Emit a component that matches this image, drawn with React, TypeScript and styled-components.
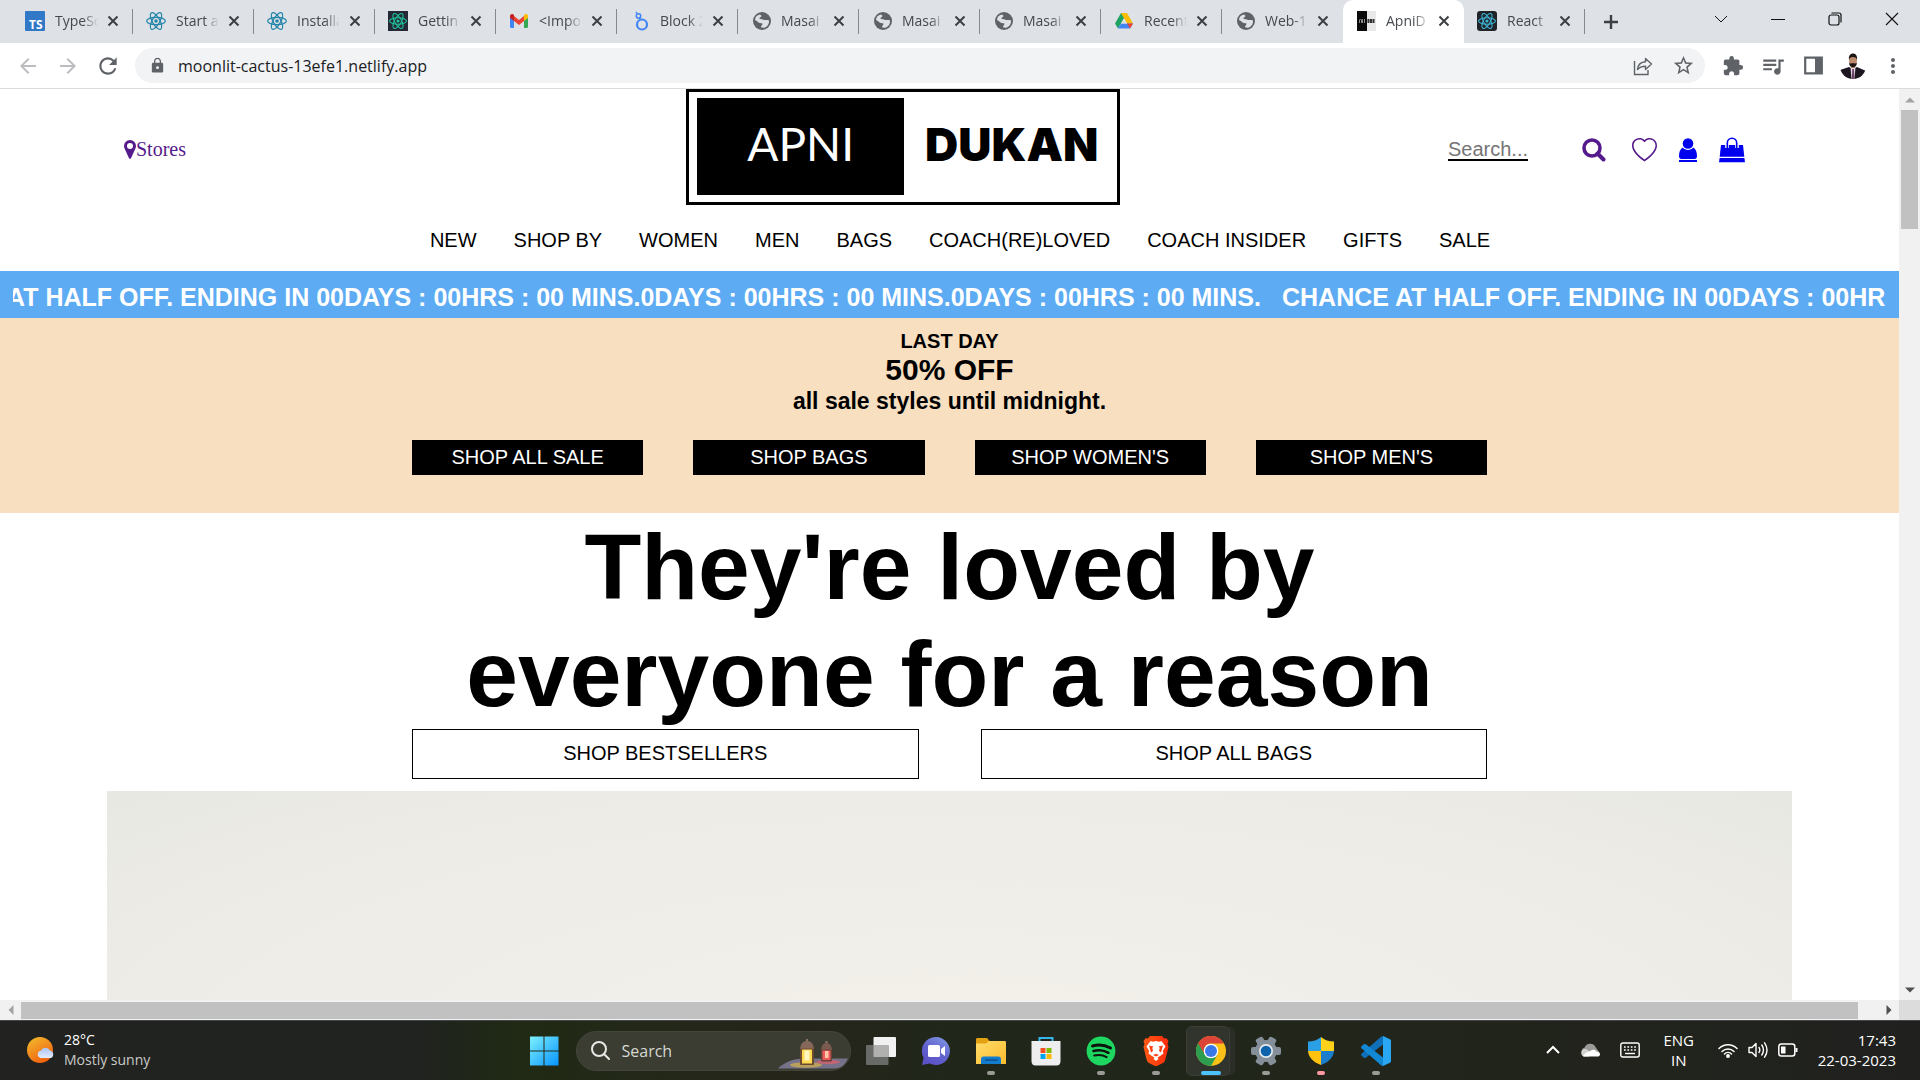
import React from "react";
import styled, { createGlobalStyle } from "styled-components";
import { BsHeart } from "react-icons/bs";
import { MdExtension, MdLock, MdQueueMusic, MdStarOutline, MdRefresh, MdArrowBack, MdArrowForward, MdMoreVert } from "react-icons/md";

const ui = `"Open Sans", "Noto Sans", sans-serif`;
const arial = `"Liberation Sans", Arial, sans-serif`;
const serif = `"Liberation Serif", "Times New Roman", serif`;

const GlobalStyle = createGlobalStyle`
  *, *::before, *::after { box-sizing: border-box; }
  body { margin: 0; overflow: hidden; background: #fff; }
  button { border: 0; padding: 0; background: none; font: inherit; color: inherit; cursor: pointer; }
  a { color: inherit; text-decoration: none; }
  svg { display: block; flex: none; }
  h1, h2, p { margin: 0; }
`;

const Screen = styled.div`
  display: flex;
  flex-direction: column;
  height: 100vh;
  font-family: ${ui};
`;

/* ---------- Browser window ---------- */

const TabStrip = styled.div`
  display: flex;
  align-items: stretch;
  height: 43px;
  flex: none;
  padding-left: 12px;
  background: #dee1e6;
  color: #45484d;
`;

const TabBox = styled.div<{ $active?: boolean; $plain?: boolean }>`
  position: relative;
  display: flex;
  align-items: center;
  width: 121px;
  flex: none;
  padding: 0 14px 1px 13px;
  border-radius: 10px 10px 0 0;
  background: ${(p) => (p.$active ? "#fff" : "transparent")};

  &::after {
    content: "";
    position: absolute;
    right: 0;
    top: 9px;
    width: 1px;
    height: 25px;
    background: ${(p) => (p.$active || p.$plain ? "transparent" : "#85888d")};
  }
`;

const TabTitle = styled.button`
  flex: 1;
  min-width: 0;
  margin-left: 10px;
  overflow: hidden;
  text-align: left;
  white-space: nowrap;
  font-size: 14px;
  line-height: 20px;
  mask-image: linear-gradient(90deg, #000 65%, transparent 100%);
`;

const TabClose = styled.button`
  width: 12px;
  height: 12px;
  margin-left: 9px;
`;

const NewTab = styled.button`
  width: 20px;
  margin: 0 17px 0 16px;
  display: grid;
  place-items: center;
`;

const WindowControls = styled.div`
  display: flex;
  margin-left: auto;
  height: 37px;
`;

const WindowButton = styled.button`
  display: grid;
  place-items: center;
  width: 57px;
  color: #111;
`;

const Toolbar = styled.div`
  display: flex;
  align-items: center;
  flex: none;
  height: 46px;
  padding: 0 7px 0 8px;
  border-bottom: 1px solid #dadce0;
  background: #fff;
  color: #5f6368;
`;

const ToolButton = styled.button<{ $dim?: boolean }>`
  display: grid;
  place-items: center;
  width: 40px;
  height: 35px;
  color: ${(p) => (p.$dim ? "#bbbdc0" : "#5f6368")};
`;

const AddressBar = styled.div`
  display: flex;
  align-items: center;
  flex: 1;
  height: 35px;
  margin: 0 8px 0 7px;
  padding: 0 2px 0 14px;
  border-radius: 18px;
  background: #f1f3f4;
`;

const AddressInput = styled.input`
  flex: 1;
  min-width: 0;
  margin-left: 12px;
  padding: 0;
  border: 0;
  outline: 0;
  background: none;
  color: #202124;
  font: 16px/24px ${ui};
`;

/* ---------- Viewport and scroll bars ---------- */

const Viewport = styled.div`
  display: grid;
  grid-template-columns: 1fr 21px;
  grid-template-rows: 1fr 20px;
  flex: 1;
  min-height: 0;
`;

const Track = styled.div<{ $across?: boolean }>`
  display: flex;
  flex-direction: ${(p) => (p.$across ? "row" : "column")};
  align-items: center;
  justify-content: space-between;
  background: #f1f1f1;
`;

const Arrow = styled.span`
  display: grid;
  place-items: center;
  width: 21px;
  height: 21px;
`;

const ThumbDown = styled.span`
  width: 17px;
  height: 119px;
  margin-bottom: auto;
  background: #c1c1c1;
`;

const ThumbAcross = styled.span`
  flex: 1;
  height: 17px;
  margin-right: 20px;
  background: #c1c1c1;
`;

const Corner = styled.div`
  background: #dcdcdc;
`;

/* ---------- Shop page ---------- */

const Page = styled.main`
  display: flex;
  flex-direction: column;
  min-width: 0;
  min-height: 0;
  overflow: hidden;
  background: #fff;
  color: #000;
  font-family: ${arial};
  font-size: 20px;
  line-height: 23px;
`;

const Header = styled.header`
  display: grid;
  grid-template-columns: 9fr 434px 10fr;
  align-items: center;
  flex: none;
  padding: 0 154px 0 124px;
`;

const Stores = styled.a`
  display: flex;
  align-items: center;
  padding-top: 4px;
  color: #551a8b;
  font-family: ${serif};
`;

const Logo = styled.a`
  display: grid;
  grid-template-columns: 207px 1fr;
  height: 116px;
  padding: 6px 6px 7px 8px;
  border: 3px solid #000;
  font-family: Lato, sans-serif;
  font-size: 46px;
  line-height: 92px;
  text-align: center;
`;

const LogoDark = styled.span`
  background: #000;
  color: #fff;
`;

const LogoLight = styled.span`
  padding-left: 8px;
  font-family: Inter, sans-serif;
  font-weight: 900;
`;

const Tools = styled.div`
  display: flex;
  align-items: center;
  justify-content: flex-end;
  padding-top: 6px;
  color: #551a8b;
`;

const SearchInput = styled.input`
  width: 80px;
  height: 22px;
  margin-right: 54px;
  padding: 0;
  border: 0;
  border-bottom: 2px solid #000;
  border-radius: 0;
  outline: 0;
  font: 20px/20px ${arial};
  &::placeholder { color: #757575; opacity: 1; }
`;

const ToolLink = styled.a<{ $blue?: boolean }>`
  margin-right: 22px;
  color: ${(p) => (p.$blue ? "#0000ee" : "#551a8b")};
  &:first-of-type { margin-right: 26px; }
  &:last-of-type { margin-right: 0; }
`;

const Nav = styled.nav`
  display: flex;
  justify-content: center;
  gap: 37px;
  flex: none;
  padding: 24px 0 19px 21px;
`;

const Ticker = styled.div`
  flex: none;
  padding: 12px 13px 6px;
  background: #5dabf3;
  color: #fff;
  font-size: 25px;
  font-weight: 700;
  line-height: 29px;
`;

const TickerWindow = styled.div`
  overflow: hidden;
`;

const TickerRun = styled.div`
  display: flex;
  gap: 21px;
  margin-left: -119px;
  white-space: nowrap;
`;

const Sale = styled.section`
  flex: none;
  padding: 12px 0 38px;
  background: #f7dfc0;
  text-align: center;
`;

const SaleLine = styled.h2<{ $size: number; $line: number }>`
  font-size: ${(p) => p.$size}px;
  line-height: ${(p) => p.$line}px;
`;

const ButtonRow = styled.div<{ $gap: number; $top: number }>`
  display: grid;
  grid-auto-flow: column;
  grid-auto-columns: 1fr;
  gap: ${(p) => p.$gap}px;
  max-width: 1075px;
  margin: ${(p) => p.$top}px auto 0;
`;

const ShopButton = styled.button<{ $outline?: boolean }>`
  height: ${(p) => (p.$outline ? 50 : 35)}px;
  padding-bottom: ${(p) => (p.$outline ? 2 : 1)}px;
  border: ${(p) => (p.$outline ? "1px solid #000" : "0")};
  background: ${(p) => (p.$outline ? "#fff" : "#000")};
  color: ${(p) => (p.$outline ? "#000" : "#fff")};
`;

const Loved = styled.section`
  display: flex;
  flex-direction: column;
  flex: 1;
  min-height: 0;
  padding: 1px 107px 0;
`;

const LovedTitle = styled.h1`
  max-width: 1075px;
  margin: 0 auto;
  font-size: 93px;
  line-height: 107px;
  text-align: center;
`;

const LovedRow = styled(ButtonRow)`
  width: 100%;
`;

const Photo = styled.div`
  flex: 1;
  margin-top: 12px;
  background: radial-gradient(ellipse at 50% 130%, #f3f1ea 0%, #f0eee8 45%, #ecebe6 75%, #e8e8e3 100%);
`;

/* ---------- Taskbar ---------- */

const Taskbar = styled.footer`
  display: grid;
  grid-template-columns: 1fr auto 1fr;
  align-items: stretch;
  flex: none;
  height: 60px;
  border-top: 1px solid #45464a;
  background: linear-gradient(90deg, #222321 0%, #20231f 22%, #202a14 27%, #232818 33%, #26251b 42%, #20271a 50%, #22251b 75%, #20211f 100%);
  color: #fff;
  font-size: 14px;
  line-height: 20px;
`;

const Weather = styled.button`
  display: flex;
  align-items: center;
  gap: 9px;
  justify-self: start;
  padding: 0 0 2px 26px;
  text-align: left;
`;

const Soft = styled.span`
  display: block;
  color: #c9cac7;
`;

const Dock = styled.div`
  display: flex;
  align-items: center;
`;

const DockButton = styled.button<{ $active?: boolean }>`
  position: relative;
  display: flex;
  align-items: center;
  width: 55px;
  height: 50px;
  padding-left: 12px;

  &::before {
    content: "";
    position: absolute;
    inset: 0 9px 0 2px;
    z-index: 0;
    border-radius: 6px;
    border: 1px solid ${(p) => (p.$active ? "#3b3e36" : "transparent")};
    background: ${(p) => (p.$active ? "#31342c" : "transparent")};
    box-shadow: ${(p) => (p.$active ? "6px 0 0 -1px #2b2e26" : "none")};
  }

  & svg { position: relative; }
`;

const Running = styled.span<{ $color: string; $wide?: boolean }>`
  position: absolute;
  left: ${(p) => (p.$wide ? 17 : 23)}px;
  bottom: 1px;
  width: ${(p) => (p.$wide ? 20 : 8)}px;
  height: 4px;
  border-radius: 2px;
  background: ${(p) => p.$color};
`;

const DockSearch = styled.button`
  display: flex;
  align-items: center;
  width: 275px;
  height: 40px;
  margin: 0 3px 0 4px;
  padding: 0 2px 0 14px;
  border: 1px solid #43453b;
  border-radius: 20px;
  background: #3b3d32;
  color: #d6d7d3;
  font-size: 16px;
  overflow: hidden;

  & span { margin-left: 12px; }
  & svg:last-child { margin-left: auto; align-self: flex-end; }
`;

const Tray = styled.div`
  display: flex;
  align-items: center;
  justify-self: end;
  gap: 20px;
  padding: 0 24px 2px 0;
  font-size: 15px;
`;

const TrayButton = styled.button`
  text-align: center;
`;

const TrayGroup = styled.button`
  display: flex;
  align-items: center;
  gap: 10px;
`;

const Language = styled(TrayButton)`
  width: 34px;
  margin: 0 2px;
`;

const Clock = styled(TrayButton)`
  min-width: 78px;
  text-align: right;
`;

/* ---------- Drawings ---------- */

const ReactMark = ({ color, bg, round = 0 }: { color: string; bg?: string; round?: number }) => (
  <svg width="20" height="20" viewBox="0 0 20 20" fill="none" stroke={color} strokeWidth="1.2">
    {bg && <rect width="20" height="20" rx={round} fill={bg} stroke="none" />}
    <g transform={bg ? "translate(10 10) scale(.9)" : "translate(10 10)"}>
      <ellipse rx="9.4" ry="3.7" />
      <ellipse rx="9.4" ry="3.7" transform="rotate(60)" />
      <ellipse rx="9.4" ry="3.7" transform="rotate(120)" />
      <circle r="1.8" fill={color} stroke="none" />
    </g>
  </svg>
);

const Globe = () => (
  <svg width="20" height="20" viewBox="0 0 20 20">
    <circle cx="11" cy="10" r="9" fill="#5f6368" />
    <path d="M4 9c0-3 2-5 5-5.500l1.500 1.200c-.3 1.500-2 1.600-2.200 2.800 1.200 1 3.500.5 4.700 1.500 1.500.3 3.500-.5 5 .5.300 3-1.200 5.800-4 7-1.500.3-2.800.2-4-.3-.3-1.500 1.700-2 1.500-3.700-2-.7-3.500.2-4.500-1.500-.6-1-1.800-1.200-3-2z" fill="#dee1e6" />
    <path d="M13 4.500c1.500 0 3 1 3.800 2.200l-2 .8c-1-.5-2-1.500-1.800-3z" fill="#5f6368" />
  </svg>
);

const TypeScriptMark = () => (
  <svg width="20" height="20" viewBox="0 0 20 20">
    <rect width="20" height="20" rx="1" fill="#3178c6" />
    <text x="4" y="17.500" fill="#fff" fontFamily="Open Sans" fontWeight="700" fontSize="12">TS</text>
  </svg>
);

const GmailMark = () => (
  <svg width="20" height="20" viewBox="0 0 20 20">
    <path d="M1 5v10.500c0 .9.600 1.500 1.400 1.500H5V8.500z" fill="#4285f4" />
    <path d="M19 5v10.500c0 .9-.600 1.500-1.400 1.500H15V8.500z" fill="#34a853" />
    <path d="M5 5l5 4 5-4v5l-5 4-5-4z" fill="#ea4335" />
    <path d="M1 5c0-2 2-2.600 3.300-1.600L5 4v6L1 7z" fill="#c5221f" />
    <path d="M19 5c0-2-2-2.600-3.300-1.600L15 4v6l4-3z" fill="#fbbc04" />
  </svg>
);

const BlockMark = () => (
  <svg width="20" height="20" viewBox="0 0 20 20" fill="none" stroke="#4285f4">
    <circle cx="12" cy="13.500" r="5" strokeWidth="2.200" />
    <circle cx="8.500" cy="5" r="2.200" strokeWidth="1.600" />
    <path d="M7 2.500L6 1M9.500 7l1 1.500" strokeWidth="1.500" />
  </svg>
);

const DriveMark = () => (
  <svg width="20" height="20" viewBox="0 0 20 20">
    <path d="M7 2h6l-3 5.200L4 17.500 1 12.500z" fill="#1ea362" />
    <path d="M7 2h6l6 10.500h-6z" fill="#fbbc04" />
    <path d="M4 17.500l3-5h12l-3 5z" fill="#4285f4" />
    <path d="M16 17.500l-3-5h6z" fill="#ea4335" />
    <path d="M10 7.400l3 5.100H7z" fill="#dee1e6" />
  </svg>
);

const ShopMark = () => (
  <svg width="20" height="20" viewBox="0 0 20 20">
    <rect x="1" width="19" height="20" fill="#e9e9e9" />
    <rect x="1" width="10" height="20" fill="#0b0b0b" />
    <path d="M3.500 12V9l1-1 1 1v3M6.500 12V8M8.500 12V8" stroke="#888" fill="none" />
    <path d="M12.500 8v4M15 8v4M17.500 8v4" stroke="#333" strokeWidth="2" />
  </svg>
);

const Cross = () => (
  <svg width="12" height="12" viewBox="0 0 12 12" stroke="#3c4043" strokeWidth="2">
    <path d="M1.500 1.500l9 9M10.500 1.500l-9 9" />
  </svg>
);

const Triangle = ({ turn, color }: { turn: number; color: string }) => (
  <svg width="10" height="10" viewBox="0 0 10 10">
    <path d="M0 7.500L5 2.500l5 5z" fill={color} transform={`rotate(${turn} 5 5)`} />
  </svg>
);

const Face = () => (
  <svg width="26" height="26" viewBox="0 0 26 26">
    <clipPath id="face"><circle cx="13" cy="13" r="13" /></clipPath>
    <g clipPath="url(#face)">
      <path d="M0 26V17l9-3 4 2 4-2 9 4v8z" fill="#1b1620" />
      <path d="M10.500 14h5l-1 12h-3z" fill="#e8dbe6" />
      <path d="M12.300 16h1.600l.7 10h-2.800z" fill="#6a3f66" />
      <rect x="11" y="10" width="4" height="5" fill="#a9775c" />
      <ellipse cx="13" cy="7.800" rx="4" ry="5.200" fill="#bd8a6c" />
      <path d="M9 7c-.5-4 1-6.500 4-6.500S17.500 3 17 7c-.6-2-1.500-3-4-3s-3.400 1-4 3zM9.200 9.500c1 1.500 1.500.8 3.800.8s2.800.7 3.800-.8c0 4-1.800 4.500-3.800 4.500s-3.800-.5-3.800-4.500z" fill="#1d1513" />
    </g>
  </svg>
);

const Share = () => (
  <svg width="20" height="20" viewBox="0 0 20 20" fill="none" stroke="#5f6368" strokeWidth="1.400">
    <path d="M1.500 5v13.500H15V14" />
    <path d="M4.500 13.500c.5-5 3-7.500 8-7.700V2.500l6 5.500-6 5.500v-3.300c-3.800 0-6 .8-8 3.300z" strokeLinejoin="round" />
  </svg>
);

const SidePanel = () => (
  <svg width="19" height="19" viewBox="0 0 19 19">
    <path d="M1.200 1.700h16.600v15.600H1.200z" fill="none" stroke="#5f6368" strokeWidth="2.200" />
    <path d="M11 1h7v17h-7z" fill="#5f6368" />
  </svg>
);

const Pin = () => (
  <svg width="12" height="19" viewBox="0 0 12 19">
    <path fillRule="evenodd" fill="currentColor" d="M6 0a6 6 0 016 6c0 1-.2 1.800-.6 2.600L7 18.200c-.4.8-1.600.8-2 0L.6 8.600A6 6 0 010 6a6 6 0 016-6zm0 3a3 3 0 100 6 3 3 0 000-6z" />
  </svg>
);

const SearchGlass = () => (
  <svg width="24" height="24" viewBox="0 0 24 24" fill="none" stroke="currentColor">
    <circle cx="10" cy="10" r="8" strokeWidth="3.600" />
    <path d="M15.500 15.500l6 6" strokeWidth="4" strokeLinecap="round" />
  </svg>
);

const Person = () => (
  <svg width="18" height="24" viewBox="0 0 18 24" fill="currentColor">
    <circle cx="9" cy="5.500" r="5.300" />
    <path d="M3.600 9.500C1.300 11 0 14 0 18c0 1.600.9 3.100 2.300 3.100h13.400c1.400 0 2.300-1.500 2.300-3.100 0-4-1.300-7-3.600-8.500-1.400 1.600-3.300 2.500-5.400 2.500s-4-.9-5.400-2.500z" />
    <path d="M0 22h18v2H0z" />
  </svg>
);

const Bag = () => (
  <svg width="26" height="26" viewBox="0 0 26 26">
    <path d="M2 8h22l1.300 11.800H.7z" fill="currentColor" />
    <path d="M.6 21h24.800l.6 4.300H0z" fill="currentColor" />
    <path d="M8 11V6.500a5 5 0 0110 0V11" fill="none" stroke="#fff" strokeWidth="3.600" />
    <path d="M8.300 11V6a4.700 4.700 0 019.400 0v5" fill="none" stroke="currentColor" strokeWidth="1.600" />
  </svg>
);

const Sun = () => (
  <svg width="29" height="28" viewBox="0 0 29 28">
    <defs>
      <linearGradient id="sun" x1="0" y1="0" x2=".6" y2="1"><stop stopColor="#f3bf2f" /><stop offset="1" stopColor="#f0610f" /></linearGradient>
      <linearGradient id="cloud" x1="0" y1="0" x2="0" y2="1"><stop stopColor="#a8c4f5" /><stop offset="1" stopColor="#e4ebfa" /></linearGradient>
    </defs>
    <circle cx="14" cy="14" r="13" fill="url(#sun)" />
    <path d="M14.500 22a3.800 3.800 0 01.5-7.400 5 5 0 019-.2 4 4 0 01.8 7.600z" fill="url(#cloud)" />
  </svg>
);

const Windows = () => (
  <svg width="30" height="30" viewBox="0 0 30 30">
    <defs><linearGradient id="win" x1="0" y1="0" x2="1" y2="1"><stop stopColor="#7df0ff" /><stop offset="1" stopColor="#0894ff" /></linearGradient></defs>
    <path d="M1 .5h13.500v14H1zM15.500 .5H29.500v14H15.500zM1 15.500h13.500v14H1zM15.500 15.500H29.500v14H15.500z" fill="url(#win)" />
  </svg>
);

const Lanterns = () => (
  <svg width="70" height="32" viewBox="0 0 70 32">
    <path d="M0 30.500c6-6 15-10 26-10h44c-3 6-6 10-14 10z" fill="#77728a" />
    <ellipse cx="28" cy="27" rx="16" ry="2.800" fill="#cdb04c" opacity=".75" />
    <ellipse cx="50" cy="24" rx="12" ry="2.200" fill="#e0606a" opacity=".7" />
    <path d="M29 1v4M48.500 3v4" stroke="#8a7568" strokeWidth="2" />
    <path d="M22 11c1-6 3-8 7-8s6 2 7 8z" fill="#85685a" />
    <rect x="22" y="10.500" width="14" height="16.500" rx="1" fill="#6b4a30" />
    <rect x="24" y="11.500" width="10" height="14" fill="#ffd952" />
    <rect x="26.500" y="12.500" width="5" height="10" fill="#fff6c0" />
    <path d="M43 12c1-5 2-7 5.500-7S53 7 54 12z" fill="#7b5a50" />
    <rect x="43" y="11.500" width="11" height="12" rx="1" fill="#6b4038" />
    <rect x="44.500" y="12.500" width="8" height="9.500" fill="#ee5b5b" />
    <rect x="47" y="13" width="3.500" height="7" fill="#ffc7a8" />
  </svg>
);

const TaskView = () => (
  <svg width="30" height="30" viewBox="0 0 30 30">
    <rect x="7.500" y="1" width="22.500" height="20" rx="1" fill="#f1f1f1" />
    <rect x="0" y="9" width="22.500" height="20" rx="1" fill="#686a67" />
    <path d="M7.500 9h15v12h-15z" fill="#b0b1af" />
  </svg>
);

const Chat = () => (
  <svg width="30" height="30" viewBox="0 0 30 30">
    <defs><linearGradient id="chat" x1=".8" y1="0" x2=".2" y2="1"><stop stopColor="#7f95e4" /><stop offset=".5" stopColor="#6263cf" /><stop offset="1" stopColor="#5b50c4" /></linearGradient></defs>
    <path d="M15 1a14 14 0 11-6.400 26.500L1 29l1.600-7.200A14 14 0 0115 1z" fill="url(#chat)" />
    <rect x="7" y="9" width="12" height="12" rx="1.500" fill="#fff" />
    <path d="M20 13l4-3v10l-4-3z" fill="#fff" />
  </svg>
);

const Folder = () => (
  <svg width="30" height="30" viewBox="0 0 30 30">
    <defs><linearGradient id="fold" x1="0" y1="0" x2="1" y2="1"><stop stopColor="#ffdc6b" /><stop offset="1" stopColor="#fbbc2c" /></linearGradient></defs>
    <path d="M0 3.500C0 2.500.7 2 1.500 2H11l3 3.500h14v6H0z" fill="#e2a212" />
    <path d="M0 7.500h10l3-2.500h15.500c1 0 1.500.5 1.500 1.500V28H0z" fill="url(#fold)" />
    <path d="M5 28v-5c0-1.500 1-2.500 2.500-2.500h15c1.500 0 2.500 1 2.500 2.500v5z" fill="#147ccd" />
    <path d="M9 24h12.500" stroke="#0b4c8c" strokeWidth="1.400" />
  </svg>
);

const Store = () => (
  <svg width="30" height="30" viewBox="0 0 30 30">
    <path d="M8.500 6V2h13v4" fill="none" stroke="#35b5e9" strokeWidth="2" />
    <path d="M.5 5h29v20c0 3-1.500 4.500-4 4.500h-21c-2.500 0-4-1.500-4-4.500z" fill="#eeeeee" />
    <path d="M9.500 12h5v5h-5z" fill="#f25022" /><path d="M15.500 12h5v5h-5z" fill="#7fba00" />
    <path d="M9.500 18h5v5h-5z" fill="#00a4ef" /><path d="M15.500 18h5v5h-5z" fill="#ffb900" />
  </svg>
);

const Spotify = () => (
  <svg width="30" height="30" viewBox="0 0 30 30" fill="none" stroke="#0d130d" strokeLinecap="round">
    <circle cx="15" cy="15" r="14.400" fill="#1ed760" stroke="none" />
    <path d="M6.500 10c6-1.700 12.500-1 18 2" strokeWidth="3" />
    <path d="M7.500 15c5-1.400 10.500-.8 15 1.800" strokeWidth="2.500" />
    <path d="M8.200 19.500c4.300-1.100 8.700-.7 12.500 1.600" strokeWidth="2" />
  </svg>
);

const Brave = () => (
  <svg width="30" height="30" viewBox="0 0 30 30">
    <defs><linearGradient id="brave"><stop stopColor="#ff5a14" /><stop offset="1" stopColor="#ff2a0a" /></linearGradient></defs>
    <path d="M9 0h12l2.200 2.500 2.300-.3 2 3-1 2.800 1 3-3.300 13c-.4 1.400-1.300 2.300-2.300 3L15 30.500 8 27c-1-.7-1.900-1.600-2.300-3L2.500 11l1-3-1-2.800 2-3 2.300.3z" fill="url(#brave)" />
    <path d="M9.500 5l2.500.8 3-.8 3 .8 2.500-.8 4 5.500-2.700 4.500.7 2.500-3.500 2.500-2.500 1.500 1 1.500L15 25l-2.500-2 1-1.500L11 20l-3.500-2.500.7-2.500-2.700-4.500z" fill="#fff" />
    <path d="M8 9.500l4.500 1-1.200 1.200.7 3.300-2 1.500zM22 9.500l-4.500 1 1.200 1.200-.7 3.300 2 1.500zM12 19l3-1.200 3 1.200-3 1.500z" fill="#fb4218" />
  </svg>
);

const Chrome = () => (
  <svg width="30" height="30" viewBox="0 0 30 30">
    <circle cx="15" cy="15" r="15" fill="#fbc116" />
    <path d="M2 7.500A15 15 0 0015 30l6.300-11.200L15 15 8.500 9z" fill="#2d9e4f" />
    <path d="M2 7.500A15 15 0 0128 7.500H15c-3.500 0-6 2-7.200 5.800L8.700 18.700z" fill="#db4437" />
    <path d="M2 7.500l6.700 11.200L5 22z" fill="#2d9e4f" />
    <circle cx="15" cy="15" r="7.300" fill="#fff" />
    <circle cx="15" cy="15" r="6" fill="#3b78e7" />
  </svg>
);

const Gear = () => (
  <svg width="30" height="30" viewBox="0 0 30 30">
    <g fill="#858f9a">
      <circle cx="15" cy="15" r="11" />
      {[30, 90, 150].map((a) => (
        <rect key={a} x="11" y="0" width="8" height="30" rx="2" transform={`rotate(${a} 15 15)`} />
      ))}
    </g>
    <circle cx="15" cy="15" r="7" fill="#e6eaee" />
    <circle cx="15" cy="15" r="5.300" fill="#0d62ab" />
  </svg>
);

const Shield = () => (
  <svg width="30" height="30" viewBox="0 0 30 30">
    <clipPath id="shield"><path d="M15 1c3.500 3 8 4.500 13 4.500V14c0 7-5 12-13 15C7 26 2 21 2 14V5.500C7 5.500 11.500 4 15 1z" /></clipPath>
    <g clipPath="url(#shield)">
      <path d="M0 0h15v15H0z" fill="#2b9fe6" /><path d="M15 0h15v15H15z" fill="#ffd21a" />
      <path d="M0 15h15v15H0z" fill="#ffc20e" /><path d="M15 15h15v15H15z" fill="#1a7dcd" />
    </g>
  </svg>
);

const Code = () => (
  <svg width="30" height="30" viewBox="0 0 30 30">
    <path d="M22 0l7 3.300c.7.4 1 .9 1 1.700v20c0 .8-.3 1.300-1 1.700L22 30z" fill="#2aa7f2" />
    <path d="M22 0v8.500L4.500 22 2.700 21.700.5 19.700c-.6-.6-.6-1.300 0-1.900L20 .8c.6-.5 1.200-.8 2-.8z" fill="#0f6fb8" />
    <path d="M22 30v-8.500L4.500 8l-1.800.3L.5 10.300c-.6.6-.6 1.300 0 1.900L20 29.200c.6.5 1.200.8 2 .8z" fill="#1287d3" />
  </svg>
);

const Cloud = () => (
  <svg width="20" height="14" viewBox="0 0 20 14">
    <path d="M4 12a4 4 0 01.6-7.500A6 6 0 0115.500 4L19 9z" fill="#9a9b98" />
    <path d="M3.500 13.500a4 4 0 01.5-7.500c3-.5 4 1 6 3l-1 4.500z" fill="#d2d3d1" />
    <path d="M3 13c2-4 6-4 8-5.500 2-1.500 4.500-1 5.500 1 2 0 3.500 1 3.500 2.700 0 1.500-1.200 2.300-2.700 2.300H5c-.8 0-1.500 0-2-.5z" fill="#fff" />
  </svg>
);

const Keyboard = () => (
  <svg width="20" height="16" viewBox="0 0 20 16" fill="none" stroke="#fff" strokeWidth="1.400">
    <rect x=".8" y="1" width="18.400" height="14" rx="2" />
    <path d="M4 5h12M4 8h12" strokeDasharray="1.700 1.700" strokeWidth="1.700" />
    <path d="M5 11.500h10" />
  </svg>
);

const Wifi = () => (
  <svg width="20" height="16" viewBox="0 0 20 16" fill="none" stroke="#fff" strokeWidth="1.500" strokeLinecap="round">
    <path d="M1 6.500a12.500 12.500 0 0118 0M4 9.500a8.500 8.500 0 0112 0M6.500 12a5 5 0 017 0" />
    <circle cx="10" cy="14" r="1.200" fill="#fff" />
  </svg>
);

const Sound = () => (
  <svg width="20" height="18" viewBox="0 0 20 18" fill="none" stroke="#fff" strokeWidth="1.400" strokeLinecap="round" strokeLinejoin="round">
    <path d="M1 6.500h3l4-4v13l-4-4H1z" />
    <path d="M11 6.500c1 1.500 1 3.500 0 5M13.800 4c2 3 2 7 0 10M16.600 1.800c3 4.500 3 10 0 14.400" />
  </svg>
);

const Battery = () => (
  <svg width="20" height="14" viewBox="0 0 20 14" fill="none" stroke="#fff" strokeWidth="1.500">
    <rect x=".8" y="1" width="16" height="12" rx="2.500" />
    <path d="M18.500 5v4" strokeWidth="2" />
    <rect x="3" y="3.500" width="4.500" height="7" fill="#fff" stroke="none" />
  </svg>
);

const Chevron = ({ up }: { up?: boolean }) => (
  <svg width="14" height="14" viewBox="0 0 14 14" fill="none" stroke="currentColor" strokeWidth={up ? 2 : 1}>
    <path d={up ? "M1 10l6-6 6 6" : "M1 4l6 6 6-6"} />
  </svg>
);

/* ---------- Data ---------- */

const tabs: { title: string; icon: React.ReactNode; active?: boolean; plain?: boolean }[] = [
  { title: "TypeSc", icon: <TypeScriptMark /> },
  { title: "Start a", icon: <ReactMark color="#2586a8" /> },
  { title: "Installa", icon: <ReactMark color="#2586a8" /> },
  { title: "Gettin", icon: <ReactMark color="#1fc49a" bg="#242938" /> },
  { title: "<Impo", icon: <GmailMark /> },
  { title: "Block 2", icon: <BlockMark /> },
  { title: "Masai", icon: <Globe /> },
  { title: "Masai", icon: <Globe /> },
  { title: "Masai", icon: <Globe /> },
  { title: "Recent", icon: <DriveMark /> },
  { title: "Web-1", icon: <Globe />, plain: true },
  { title: "ApniD", icon: <ShopMark />, active: true },
  { title: "React", icon: <ReactMark color="#3fb4d6" bg="#202328" round={3} /> },
];

const navItems = ["NEW", "SHOP BY", "WOMEN", "MEN", "BAGS", "COACH(RE)LOVED", "COACH INSIDER", "GIFTS", "SALE"];
const saleButtons = ["SHOP ALL SALE", "SHOP BAGS", "SHOP WOMEN'S", "SHOP MEN'S"];
const tickerText = "CHANCE AT HALF OFF. ENDING IN 00DAYS : 00HRS : 00 MINS.0DAYS : 00HRS : 00 MINS.0DAYS : 00HRS : 00 MINS.";

const dockApps: { name: string; icon: React.ReactNode; running?: string; active?: boolean }[] = [
  { name: "Task view", icon: <TaskView /> },
  { name: "Chat", icon: <Chat /> },
  { name: "File Explorer", icon: <Folder />, running: "#9a9b95" },
  { name: "Microsoft Store", icon: <Store /> },
  { name: "Spotify", icon: <Spotify />, running: "#9a9b95" },
  { name: "Brave", icon: <Brave />, running: "#9a9b95" },
  { name: "Chrome", icon: <Chrome />, running: "#4cc2ff", active: true },
  { name: "Settings", icon: <Gear />, running: "#9a9b95" },
  { name: "Security", icon: <Shield />, running: "#ff99a4" },
  { name: "Code", icon: <Code />, running: "#9a9b95" },
];

export default function App() {
  return (
    <Screen>
      <GlobalStyle />
      <TabStrip>
        {tabs.map((t, i) => (
          <TabBox key={i} $active={t.active} $plain={t.plain}>
            {t.icon}
            <TabTitle>{t.title}</TabTitle>
            <TabClose aria-label="Close tab"><Cross /></TabClose>
          </TabBox>
        ))}
        <NewTab aria-label="New tab">
          <svg width="16" height="16" viewBox="0 0 16 16" stroke="#3c4043" strokeWidth="2.400"><path d="M8 1v14M1 8h14" /></svg>
        </NewTab>
        <WindowControls>
          <WindowButton aria-label="Search tabs"><Chevron /></WindowButton>
          <WindowButton aria-label="Minimize">
            <svg width="14" height="14" viewBox="0 0 14 14" stroke="currentColor"><path d="M0 7.500h14" /></svg>
          </WindowButton>
          <WindowButton aria-label="Restore">
            <svg width="14" height="14" viewBox="0 0 14 14" fill="none" stroke="currentColor" strokeWidth="1.200">
              <rect x="1" y="3" width="10" height="10" rx="2" /><path d="M3.500 1H11a2 2 0 012 2v7.500" />
            </svg>
          </WindowButton>
          <WindowButton aria-label="Close">
            <svg width="14" height="14" viewBox="0 0 14 14" stroke="currentColor" strokeWidth="1.100"><path d="M1 1l12 12M13 1L1 13" /></svg>
          </WindowButton>
        </WindowControls>
      </TabStrip>

      <Toolbar>
        <ToolButton $dim aria-label="Back"><MdArrowBack size={24} /></ToolButton>
        <ToolButton $dim aria-label="Forward"><MdArrowForward size={24} /></ToolButton>
        <ToolButton aria-label="Reload"><MdRefresh size={26} /></ToolButton>
        <AddressBar>
          <MdLock size={17} />
          <AddressInput aria-label="Address" defaultValue="moonlit-cactus-13efe1.netlify.app" />
          <ToolButton aria-label="Share"><Share /></ToolButton>
          <ToolButton aria-label="Bookmark"><MdStarOutline size={23} /></ToolButton>
        </AddressBar>
        <ToolButton aria-label="Extensions"><MdExtension size={22} /></ToolButton>
        <ToolButton aria-label="Media"><MdQueueMusic size={26} /></ToolButton>
        <ToolButton aria-label="Side panel"><SidePanel /></ToolButton>
        <ToolButton aria-label="Profile"><Face /></ToolButton>
        <ToolButton aria-label="Menu"><MdMoreVert size={24} /></ToolButton>
      </Toolbar>

      <Viewport>
        <Page>
          <Header>
            <Stores href="#stores"><Pin />Stores</Stores>
            <Logo href="#home">
              <LogoDark>APNI</LogoDark>
              <LogoLight>DUKAN</LogoLight>
            </Logo>
            <Tools>
              <SearchInput aria-label="Search the shop" placeholder="Search..." />
              <ToolLink href="#search" aria-label="Search"><SearchGlass /></ToolLink>
              <ToolLink href="#wishlist" aria-label="Wishlist"><BsHeart size={25} /></ToolLink>
              <ToolLink href="#account" aria-label="Account" $blue><Person /></ToolLink>
              <ToolLink href="#bag" aria-label="Bag" $blue><Bag /></ToolLink>
            </Tools>
          </Header>
          <Nav>
            {navItems.map((n) => <a key={n} href="#shop">{n}</a>)}
          </Nav>
          <Ticker>
            <TickerWindow>
              <TickerRun>
                <span>{tickerText}</span>
                <span>{tickerText}</span>
              </TickerRun>
            </TickerWindow>
          </Ticker>
          <Sale>
            <SaleLine $size={20} $line={23}>LAST DAY</SaleLine>
            <SaleLine $size={30} $line={34}>50% OFF</SaleLine>
            <SaleLine $size={23} $line={28}>all sale styles until midnight.</SaleLine>
            <ButtonRow $gap={50} $top={25}>
              {saleButtons.map((b) => <ShopButton key={b}>{b}</ShopButton>)}
            </ButtonRow>
          </Sale>
          <Loved>
            <LovedTitle>They're loved by everyone for a reason</LovedTitle>
            <LovedRow $gap={62} $top={1}>
              <ShopButton $outline>SHOP BESTSELLERS</ShopButton>
              <ShopButton $outline>SHOP ALL BAGS</ShopButton>
            </LovedRow>
            <Photo />
          </Loved>
        </Page>
        <Track>
          <Arrow><Triangle turn={0} color="#a3a3a3" /></Arrow>
          <ThumbDown />
          <Arrow><Triangle turn={180} color="#505050" /></Arrow>
        </Track>
        <Track $across>
          <Arrow><Triangle turn={-90} color="#a3a3a3" /></Arrow>
          <ThumbAcross />
          <Arrow><Triangle turn={90} color="#505050" /></Arrow>
        </Track>
        <Corner />
      </Viewport>

      <Taskbar>
        <Weather>
          <Sun />
          <span>28°C<Soft>Mostly sunny</Soft></span>
        </Weather>
        <Dock>
          <DockButton aria-label="Start"><Windows /></DockButton>
          <DockSearch>
            <svg width="19" height="19" viewBox="0 0 19 19" fill="none" stroke="#e8e8e6" strokeWidth="2" strokeLinecap="round">
              <circle cx="8" cy="8" r="7" /><path d="M13 13l5 5" />
            </svg>
            <span>Search</span>
            <Lanterns />
          </DockSearch>
          {dockApps.map((a) => (
            <DockButton key={a.name} aria-label={a.name} $active={a.active}>
              {a.icon}
              {a.running && <Running $color={a.running} $wide={a.active} />}
            </DockButton>
          ))}
        </Dock>
        <Tray>
          <TrayButton aria-label="Hidden icons"><Chevron up /></TrayButton>
          <TrayButton aria-label="OneDrive"><Cloud /></TrayButton>
          <TrayButton aria-label="Touch keyboard"><Keyboard /></TrayButton>
          <Language>ENG<br />IN</Language>
          <TrayGroup aria-label="Network, sound and battery">
            <Wifi /><Sound /><Battery />
          </TrayGroup>
          <Clock>17:43<br />22-03-2023</Clock>
        </Tray>
      </Taskbar>
    </Screen>
  );
}
